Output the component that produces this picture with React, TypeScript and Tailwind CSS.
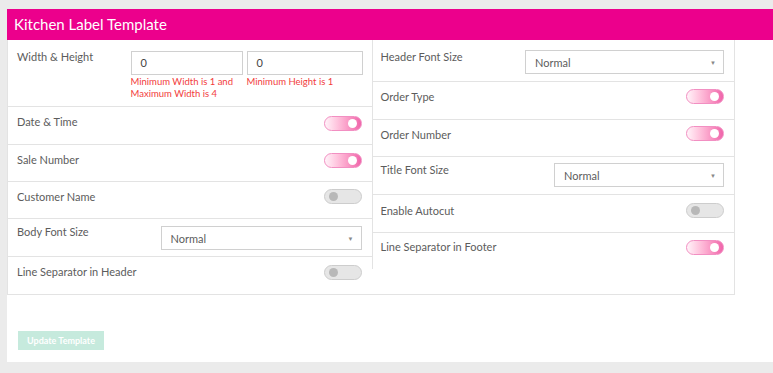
import React from "react";

const font = { fontFamily: "Lato, 'Open Sans', sans-serif" };

function Toggle({ on }: { on: boolean }) {
  return on ? (
    <div className="relative h-[15px] w-[38px] rounded-full border border-[#f28fc2] bg-gradient-to-r from-[#fff3f9] to-[#ef63aa]">
      <div className="absolute right-[4px] top-[2px] h-[9px] w-[9px] rounded-full bg-white" />
    </div>
  ) : (
    <div className="relative h-[15px] w-[38px] rounded-full border border-[#cdcdcd] bg-[#e6e6e6]">
      <div className="absolute left-[4px] top-[2px] h-[9px] w-[9px] rounded-full bg-[#b8b8b8]" />
    </div>
  );
}

function Select({ w }: { w: string }) {
  return (
    <div className={`flex h-[24px] items-center justify-between border border-[#d0d0d0] bg-white pl-[9px] pr-[7px] ${w}`}>
      <span className="pt-[3px] text-[11px] text-[#5c5c5c]">Normal</span>
      <span className="text-[6px] text-[#888]">▼</span>
    </div>
  );
}

function Label({ children, pt = "pt-[8px]" }: { children: React.ReactNode; pt?: string }) {
  return <div className={`text-[11px] leading-[14px] text-[#5c5c5c] ${pt}`}>{children}</div>;
}

export default function App() {
  return (
    <div className="h-[373px] w-full overflow-hidden bg-[#ebebeb] pl-[7px] pt-[9px]" style={font}>
      <div className="h-[353px] bg-white">
        <div className="h-[31px] bg-[#ec008c] pl-[7px] text-[15px] leading-[31px] text-white">
          Kitchen Label Template
        </div>
        <div className="flex h-[255px] w-[728px] items-start border-b border-l border-r border-[#e3e3e3]">
          {/* left column */}
          <div className="w-[364px]">
            <div className="flex h-[67px] justify-between border-b border-[#e3e3e3] pl-[9px] pr-[9px]">
              <Label pt="pt-[10px]">Width &amp; Height</Label>
              <div className="flex gap-[4px] pt-[11px]">
                <div className="w-[112px]">
                  <div className="flex h-[24px] items-center border border-[#d0d0d0] pl-[9px] text-[11px] text-[#444]">0</div>
                  <div className="pt-[1px] text-[9.5px] leading-[12px] text-[#f23c3c]">
                    Minimum Width is 1 and
                    <br />
                    Maximum Width is 4
                  </div>
                </div>
                <div className="w-[116px]">
                  <div className="flex h-[24px] items-center border border-[#d0d0d0] pl-[9px] text-[11px] text-[#444]">0</div>
                  <div className="pt-[1px] text-[9.5px] leading-[12px] text-[#f23c3c]">Minimum Height is 1</div>
                </div>
              </div>
            </div>
            <div className="flex h-[38px] justify-between border-b border-[#e3e3e3] pl-[9px] pr-[10px]">
              <Label>Date &amp; Time</Label>
              <div className="pt-[9px]"><Toggle on /></div>
            </div>
            <div className="flex h-[37px] justify-between border-b border-[#e3e3e3] pl-[9px] pr-[10px]">
              <Label>Sale Number</Label>
              <div className="pt-[8px]"><Toggle on /></div>
            </div>
            <div className="flex h-[37px] justify-between border-b border-[#e3e3e3] pl-[9px] pr-[10px]">
              <Label>Customer Name</Label>
              <div className="pt-[7px]"><Toggle on={false} /></div>
            </div>
            <div className="flex h-[38px] justify-between border-b border-[#e3e3e3] pl-[9px] pr-[10px]">
              <Label pt="pt-[6px]">Body Font Size</Label>
              <div className="pt-[7px]"><Select w="w-[201px]" /></div>
            </div>
            <div className="flex h-[37px] justify-between pl-[9px] pr-[10px]">
              <Label pt="pt-[8px]">Line Separator in Header</Label>
              <div className="pt-[8px]"><Toggle on={false} /></div>
            </div>
          </div>
          {/* right column */}
          <div className="h-[229px] w-[363px] border-l border-[#e3e3e3]">
            <div className="flex h-[42px] justify-between border-b border-[#e3e3e3] pl-[8px] pr-[10px]">
              <Label pt="pt-[10px]">Header Font Size</Label>
              <div className="pt-[10px]"><Select w="w-[199px]" /></div>
            </div>
            <div className="flex h-[38px] justify-between border-b border-[#e3e3e3] pl-[8px] pr-[10px]">
              <Label>Order Type</Label>
              <div className="pt-[7px]"><Toggle on /></div>
            </div>
            <div className="flex h-[37px] justify-between border-b border-[#e3e3e3] pl-[8px] pr-[10px]">
              <Label>Order Number</Label>
              <div className="pt-[6px]"><Toggle on /></div>
            </div>
            <div className="flex h-[38px] justify-between border-b border-[#e3e3e3] pl-[8px] pr-[10px]">
              <Label pt="pt-[6px]">Title Font Size</Label>
              <div className="pt-[6px]"><Select w="w-[170px]" /></div>
            </div>
            <div className="flex h-[38px] justify-between border-b border-[#e3e3e3] pl-[8px] pr-[10px]">
              <Label pt="pt-[9px]">Enable Autocut</Label>
              <div className="pt-[8px]"><Toggle on={false} /></div>
            </div>
            <div className="flex h-[36px] justify-between pl-[8px] pr-[10px]">
              <Label pt="pt-[7px]">Line Separator in Footer</Label>
              <div className="pt-[7px]"><Toggle on /></div>
            </div>
          </div>
        </div>
        <div className="pl-[11px] pt-[36px]">
          <div className="flex h-[19px] w-[86px] items-center justify-center bg-[#c6eadd] text-[9px] font-bold text-white">
            Update Template
          </div>
        </div>
      </div>
    </div>
  );
}
